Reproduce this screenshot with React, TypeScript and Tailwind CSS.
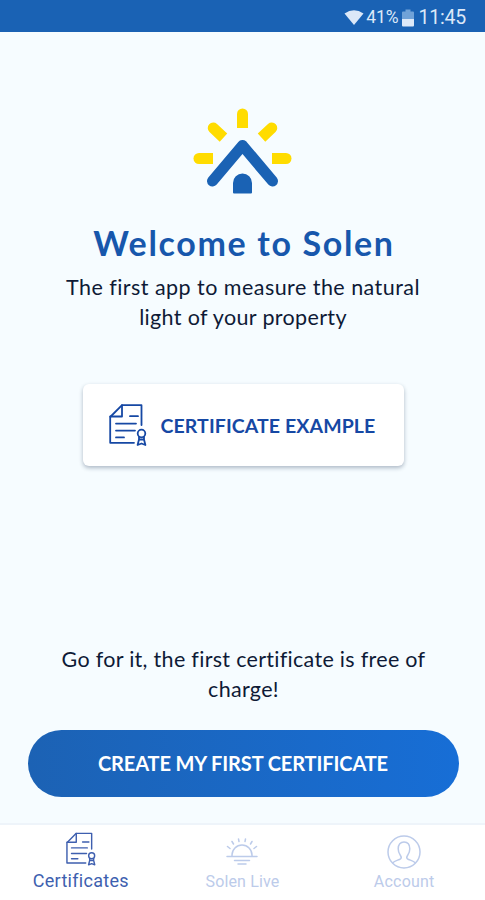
import React from "react";

function CertificateIcon({ className, stroke = 2 }: { className: string; stroke?: number }) {
  return (
    <svg viewBox="0 0 38 42" className={className} fill="none" stroke="currentColor" strokeWidth={stroke} strokeLinecap="round" strokeLinejoin="round">
      <path d="M32.500 21V1.200H13L1.200 13V38.800H25" />
      <path d="M13 1.200V12.500H1.200" />
      <path d="M21 12.200h8M7 19.600h20M7 26.600h19M7 33.400h8" />
      <circle cx="32.500" cy="29.500" r="3.800" />
      <path d="M30 33v2.500L28.600 41L32.500 39.500L36.400 41L35 35.500V33M30 35.500h5" />
    </svg>
  );
}

function Logo() {
  return (
    <svg viewBox="0 0 100 88" className="mr-[2px] h-[88px] w-[100px]">
      <g fill="#ffdc00">
        <path d="M45 20V6a5.500 5.500 0 0 1 11 0V20z" />
        <path d="M45 21V7a5.500 5.500 0 0 1 11 0V21z" transform="translate(26 24.500) rotate(-47) translate(-50.500 -13.500)" />
        <path d="M45 21V7a5.500 5.500 0 0 1 11 0V21z" transform="translate(75 24.500) rotate(47) translate(-50.500 -13.500)" />
        <path d="M21 45H7a5.500 5.500 0 0 0 0 11H21z" />
        <path d="M80 45H94a5.500 5.500 0 0 1 0 11H80z" />
      </g>
      <path d="M20.500 73L50.500 37.500L80.500 73" stroke="#1a62b4" strokeWidth="11" strokeLinecap="round" strokeLinejoin="round" fill="none" />
      <path d="M41 84.500V75a9.500 9.500 0 0 1 19 0V84.500a1 1 0 0 1-1 1H42a1 1 0 0 1-1-1z" fill="#1a62b4" />
    </svg>
  );
}

function SunIcon() {
  return (
    <svg viewBox="0 0 34 30" className="h-[30px] w-[34px]" fill="none" stroke="currentColor" strokeWidth="1.500" strokeLinecap="round">
      <path d="M2 19.500h30M9.500 23.500h15M13 27h8M7 19v-1a10 10 0 0 1 20 0v1" />
      <path d="M2.500 9.500l2.500 2M7 4.500l1.500 2.500M13.500 2l.5 2.500M20.500 2l-.5 2.500M27 4.500L25.500 7M31.500 9.500l-2.500 2" />
    </svg>
  );
}

function AccountIcon() {
  return (
    <svg viewBox="0 0 34 34" className="h-[34px] w-[34px]" fill="none" stroke="currentColor" strokeWidth="1.500" strokeLinejoin="round">
      <circle cx="17" cy="17" r="16" />
      <path d="M5.500 28c2.500-2.500 6-2.800 8-4.200c1.300-1 .8-2.300-.2-3.600c-1.400-1.800-2.100-3.800-2.100-6.400c0-4.300 2.200-6.800 5.800-6.800s5.800 2.500 5.800 6.800c0 2.600-.7 4.600-2.100 6.400c-1 1.300-1.500 2.600-.2 3.600c2 1.400 5.500 1.700 8 4.200" />
    </svg>
  );
}

export default function App() {
  return (
    <div className="flex h-[900px] w-[485px] flex-col overflow-hidden bg-[#f6fcff] font-['Lato',sans-serif] text-[#0e1a36]">
      <header className="flex h-8 shrink-0 items-center justify-end bg-[#1a62b4] pr-[19px] pt-[3px] font-['Roboto',sans-serif] text-[#dce8f8]">
        <svg viewBox="0 0 20 15" className="mr-[2px] h-[15px] w-[20px]" fill="currentColor">
          <path d="M.5 3.500Q10-3 19.500 3.500L10 15z" />
        </svg>
        <span className="mr-1 text-[17.500px] tracking-[-0.100px]">41%</span>
        <svg viewBox="0 0 12 18" className="mr-[4px] h-[18px] w-[12px]">
          <path d="M0 10V3.500A1 1 0 0 1 1 2.500H3.500V.5h5v2H11a1 1 0 0 1 1 1V10z" fill="#70a2d8" />
          <path d="M0 10H12v6.500a1 1 0 0 1-1 1H1a1 1 0 0 1-1-1z" fill="currentColor" />
        </svg>
        <span className="text-[19.500px] tracking-[-0.200px]">11:45</span>
      </header>

      <main className="flex flex-1 flex-col items-center pt-[76px]">
        <Logo />
        <h1 className="mt-[27px] ml-[3px] whitespace-nowrap text-[34px] leading-[40px] font-bold tracking-[1.650px] text-[#1757ac]">Welcome to Solen</h1>
        <p className="mt-[9px] ml-px text-center text-[21.500px] leading-[30px] tracking-[0.460px] whitespace-nowrap">
          The first app to measure the natural
          <br />
          <span className="tracking-[0.350px]">light of your property</span>
        </p>
        <button className="mt-[52px] ml-px flex h-[82px] w-[321px] items-center rounded-[6px] bg-white pl-[26px] text-[#1648a4] shadow-[0_2px_4px_rgba(20,45,75,0.32)]">
          <CertificateIcon className="h-[42px] w-[38px] shrink-0" stroke={1.8} />
          <span className="ml-[14px] pt-px whitespace-nowrap text-[19.500px] font-bold tracking-[0.100px]">CERTIFICATE EXAMPLE</span>
        </button>
        <p className="mt-auto ml-[2px] text-center text-[21.500px] leading-[30px] tracking-[0.300px] whitespace-nowrap">
          Go for it, the first certificate is free of
          <br />
          charge!
        </p>
        <button className="mt-[26px] mb-[26px] ml-px h-[67px] w-[431px] rounded-full bg-linear-to-r from-[#1c62b4] to-[#176ed6] pb-px text-[20px] font-bold tracking-[-0.120px] whitespace-nowrap text-white">
          CREATE MY FIRST CERTIFICATE
        </button>
      </main>

      <nav className="grid h-[77px] shrink-0 grid-cols-3 border-t-2 border-[#eef4fa] bg-white font-['Roboto',sans-serif] text-[#bccbea]">
        <div className="flex flex-col items-center pt-[7px] text-[#3e5faf]">
          <CertificateIcon className="h-[34px] w-[30px]" stroke={1.8} />
          <span className="mt-[3px] text-[18px] leading-6 tracking-[0.300px]">Certificates</span>
        </div>
        <div className="flex flex-col items-center pt-[12px]">
          <SunIcon />
          <span className="mt-[3px] text-[16px] leading-6 tracking-[0.150px]">Solen Live</span>
        </div>
        <div className="flex flex-col items-center pt-[10px]">
          <AccountIcon />
          <span className="mt-px text-[16px] leading-6 tracking-[0.200px]">Account</span>
        </div>
      </nav>
    </div>
  );
}
